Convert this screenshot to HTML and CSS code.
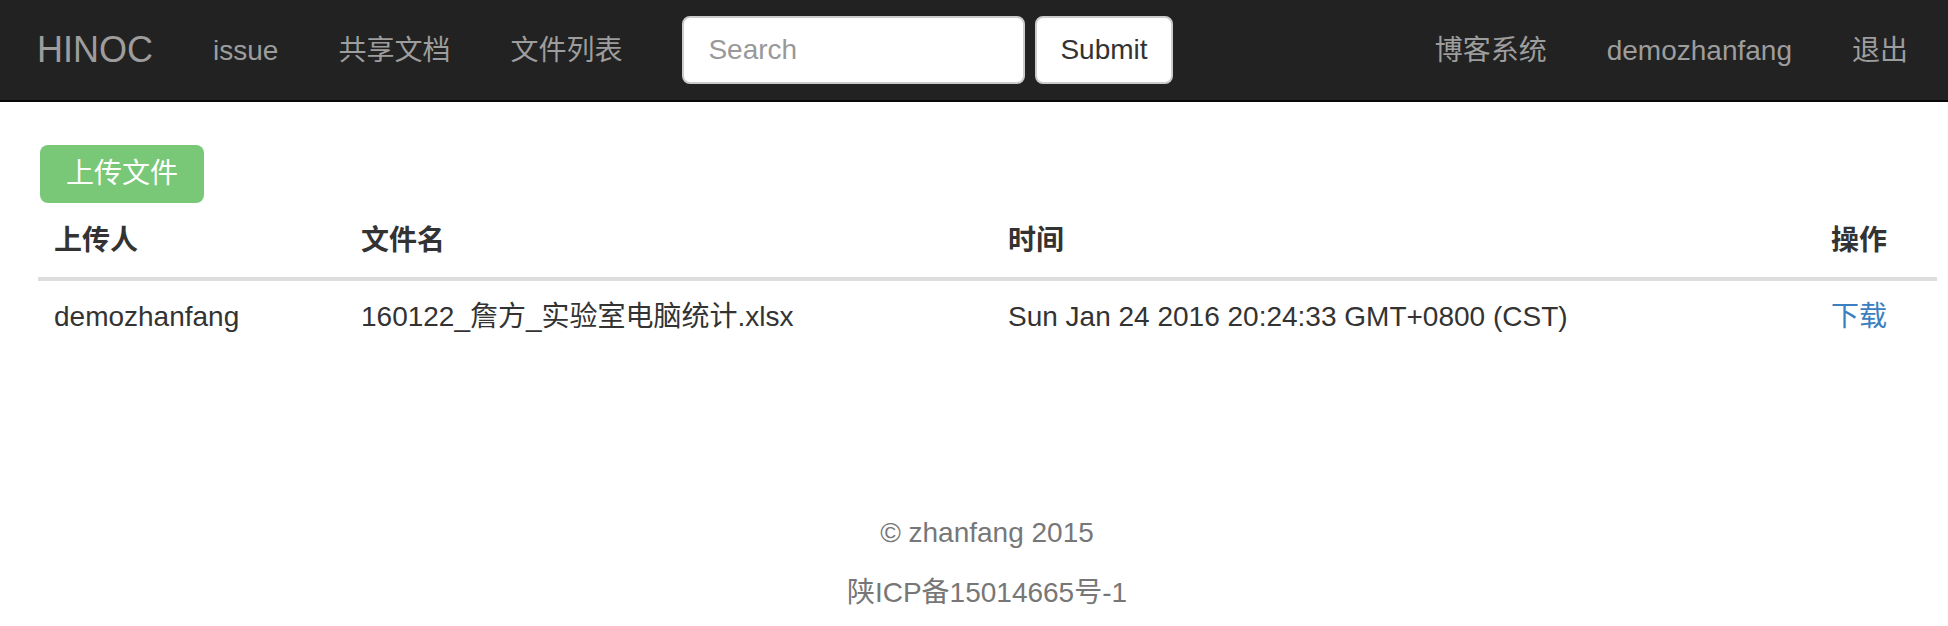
FILE: index.html
```html
<!DOCTYPE html>
<html lang="zh-CN">
<head>
<meta charset="utf-8">
<title>HINOC - 文件列表</title>
<link rel="stylesheet" href="styles.css">
</head>
<body>
<nav class="navbar">
  <a class="brand" href="#">HINOC</a>
  <ul class="nav">
    <li><a href="#">issue</a></li>
    <li><a href="#">共享文档</a></li>
    <li><a href="#">文件列表</a></li>
  </ul>
  <form class="nav-form">
    <input class="search-input" type="text" placeholder="Search">
    <button class="btn-default" type="button">Submit</button>
  </form>
  <ul class="nav nav-right">
    <li><a href="#">博客系统</a></li>
    <li><a href="#">demozhanfang</a></li>
    <li><a href="#">退出</a></li>
  </ul>
</nav>
<main class="content">
  <button class="btn-upload" type="button">上传文件</button>
  <table class="file-table">
    <colgroup>
      <col class="col-user">
      <col class="col-name">
      <col class="col-time">
      <col class="col-op">
    </colgroup>
    <thead>
      <tr><th>上传人</th><th>文件名</th><th>时间</th><th>操作</th></tr>
    </thead>
    <tbody>
      <tr>
        <td>demozhanfang</td>
        <td>160122_詹方_实验室电脑统计.xlsx</td>
        <td>Sun Jan 24 2016 20:24:33 GMT+0800 (CST)</td>
        <td><a class="link" href="#">下载</a></td>
      </tr>
    </tbody>
  </table>
</main>
<footer class="footer">
  <p>© zhanfang 2015</p>
  <p>陕ICP备15014665号-1</p>
</footer>
</body>
</html>
```

FILE: styles.css
```css
* { box-sizing: border-box; }

html, body {
  margin: 0;
  padding: 0;
  background: #fff;
}

body {
  font-family: "Liberation Sans", "Noto Sans CJK SC", sans-serif;
  font-size: 28px;
  line-height: 40px;
  color: #333;
}

a { text-decoration: none; }

.navbar {
  display: flex;
  align-items: flex-start;
  height: 102px;
  background: #222;
  border-bottom: 2px solid #080808;
  padding: 0 10px 0 7px;
}

.brand {
  display: block;
  padding: 30px 30px 30px 30px;
  font-size: 36px;
  line-height: 40px;
  color: #9d9d9d;
}

.nav {
  display: flex;
  list-style: none;
  margin: 0;
  padding: 0;
}

.nav a {
  display: block;
  padding: 31px 30px 29px;
  line-height: 40px;
  color: #9d9d9d;
}

.nav-right { margin-left: auto; }

.nav-form {
  display: flex;
  gap: 10px;
  padding: 16px 30px;
  margin: 0;
}

.search-input {
  width: 343px;
  height: 68px;
  margin: 0;
  padding: 0 24px;
  border: 2px solid #ccc;
  border-radius: 8px;
  font-family: inherit;
  font-size: 28px;
  color: #555;
  background: #fff;
  outline: none;
}

.search-input::placeholder { color: #999; }

.btn-default {
  height: 68px;
  margin: 0;
  padding: 0 23px;
  border: 2px solid #ccc;
  border-radius: 8px;
  background: #fff;
  color: #333;
  font-family: inherit;
  font-size: 28px;
}

.content {
  padding: 43px 11px 0 38px;
}

.btn-upload {
  display: block;
  height: 58px;
  margin: 0 0 2px 2px;
  padding: 0 26px;
  border: none;
  border-radius: 8px;
  background: #78c878;
  color: #fff;
  font-family: inherit;
  font-size: 28px;
  line-height: 58px;
}

.file-table {
  width: 100%;
  table-layout: fixed;
  border-collapse: collapse;
  border-spacing: 0;
}

.col-user { width: 307px; }
.col-name { width: 647px; }
.col-time { width: 823px; }
.col-op { width: 122px; }

.file-table th,
.file-table td {
  padding: 16px;
  line-height: 40px;
  text-align: left;
  vertical-align: bottom;
  white-space: nowrap;
}

.file-table th {
  font-weight: bold;
  border-bottom: 4px solid #ddd;
}

.link { color: #3a80c0; }

.footer {
  padding: 160px 0 0 26px;
  text-align: center;
  color: #777;
}

.footer p {
  margin: 0 0 20px;
  line-height: 40px;
}
```
